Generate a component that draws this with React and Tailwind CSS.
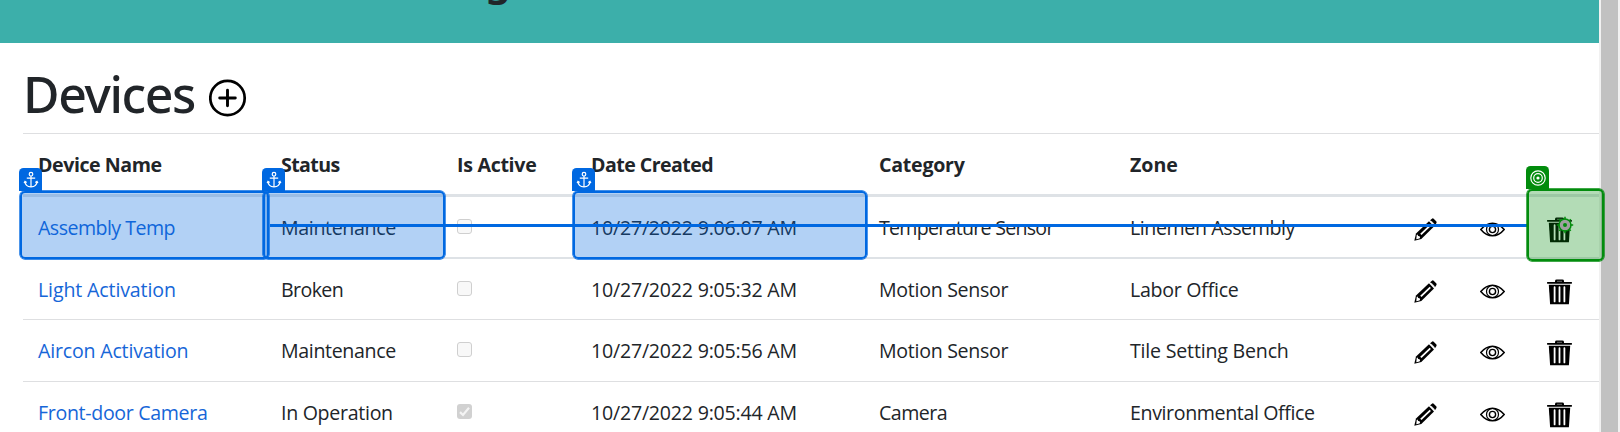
const columns = [
  { label: "Device Name", track: "tracking-[-0.45px]" },
  { label: "Status", track: "tracking-[-0.6px]" },
  { label: "Is Active", track: "tracking-[-0.3px]" },
  { label: "Date Created", track: "tracking-[-0.55px]" },
  { label: "Category", track: "tracking-[-0.25px]" },
  { label: "Zone", track: "tracking-[0px]" },
];

const devices = [
  {
    name: ["Assembly Temp", "tracking-[-0.54px]"],
    status: ["Maintenance", "tracking-[-0.36px]"],
    active: false,
    created: "10/27/2022 9:06:07 AM",
    category: ["Temperature Sensor", "tracking-[-0.73px]"],
    zone: ["Linemen Assembly", "tracking-[-0.4px]"],
    row: "h-[62px] border-b-2 border-[#dee2e6]",
  },
  {
    name: ["Light Activation", "tracking-[-0.14px]"],
    status: ["Broken", "tracking-[-0.6px]"],
    active: false,
    created: "10/27/2022 9:05:32 AM",
    category: ["Motion Sensor", "tracking-[-0.3px]"],
    zone: ["Labor Office", "tracking-[-0.27px]"],
    row: "h-[61px] border-b border-[#dedfe1]",
  },
  {
    name: ["Aircon Activation", "tracking-[-0.2px]"],
    status: ["Maintenance", "tracking-[-0.36px]"],
    active: false,
    created: "10/27/2022 9:05:56 AM",
    category: ["Motion Sensor", "tracking-[-0.3px]"],
    zone: ["Tile Setting Bench", "tracking-[-0.2px]"],
    row: "h-[62px] border-b border-[#dedfe1]",
  },
  {
    name: ["Front-door Camera", "tracking-[-0.33px]"],
    status: ["In Operation", "tracking-[-0.3px]"],
    active: true,
    created: "10/27/2022 9:05:44 AM",
    category: ["Camera", "tracking-[-0.55px]"],
    zone: ["Environmental Office", "tracking-[-0.38px]"],
    row: "h-[62px]",
  },
];

const grid =
  "grid grid-cols-[244px_176px_134px_288px_251px_276px_67px_67px_73px] items-start";

function Cell({ text, track, className = "pl-[14px]" }) {
  return (
    <div className={`pt-4 leading-[30px] whitespace-nowrap ${track} ${className}`}>
      {text}
    </div>
  );
}

function Checkbox({ checked }) {
  return (
    <div className="pt-[22px] pl-[14px]">
      {checked ? (
        <div className="flex size-[15px] items-center justify-center rounded-[3px] bg-[#d1d1d1]">
          <svg viewBox="0 0 15 15" className="size-[15px]" fill="none" stroke="#f4f4f4" strokeWidth="2.2">
            <path d="M3 8.1 6 11 12 3.8" />
          </svg>
        </div>
      ) : (
        <div className="size-[15px] rounded-[3px] border border-[#cfcfcf] bg-[#f8f8f8]" />
      )}
    </div>
  );
}

function Pencil() {
  return (
    <svg viewBox="0 0 24 24" className="mt-[21px] ml-[22px] size-6">
      <path d="M.3 22.8 2 15.6 15 3.2l5 5.2L7.3 20.9Z" fill="#000" />
      <path d="M16.1 2.2 18.3.4Q19 0 19.7.7L22.4 3.6Q23 4.4 22.3 5.2L21 7.2Z" fill="#000" />
      <path d="m17.1 2.9 3.7 3.8" stroke="#fff" strokeWidth=".8" />
      <path d="m6.2 15.8 9.5-9.1 1.2 1.3-9.4 9.1Z" fill="#fff" />
      <path d="m2.7 17 .9-.5.5 1.6 1.5.2.5 1.5-.7.6-3.1.9Z" fill="#fff" />
    </svg>
  );
}

function Eye() {
  return (
    <svg viewBox="0 0 25 15" className="mt-[25px] ml-[21px] h-[15px] w-[25px]" fill="none" stroke="#000">
      <path d="M.8 7.5Q6 1.2 12.5 1.2T24.2 7.5Q19 13.8 12.5 13.8T.8 7.5Z" strokeWidth="1.5" />
      <circle cx="12.5" cy="7.5" r="6" strokeWidth="1.2" />
      <circle cx="12.5" cy="7.5" r="3.1" strokeWidth="1.4" />
    </svg>
  );
}

function Trash() {
  return (
    <svg viewBox="0 0 25 26" className="mt-5 ml-[21px] h-[26px] w-[25px]">
      <path d="M8 3V1.8Q8.2.5 9.7.5h5.6Q16.8.5 17 1.8V3Z" fill="#000" />
      <path d="M10 2.3h5" stroke="#777" strokeWidth=".9" />
      <rect x="0" y="2.9" width="25" height="1.8" rx=".6" fill="#000" />
      <path d="M1.8 5.7h21.4l-1.3 19.6H3.1Z" fill="#000" />
      <path d="M7.6 8.2v14.2M12.5 8.2v14.2M17.4 8.2v14.2" stroke="#fff" strokeWidth="1.8" strokeLinecap="round" />
    </svg>
  );
}

function Anchor() {
  return (
    <svg viewBox="0 0 16 18" className="h-[18px] w-4" fill="none" stroke="#fff" strokeWidth="1.2">
      <circle cx="8" cy="3.2" r="1.8" />
      <path d="M8 5v11M3.8 7.2h8.4" />
      <path d="M1.9 10.2Q2.2 15.7 8 15.9 13.8 15.7 14.1 10.2M1.1 12.1l.9-1.8 1.7 1.2M14.9 12.1l-.9-1.8-1.7 1.2" />
    </svg>
  );
}

function AnchorBox({ place, width }) {
  return (
    <div className={`absolute top-[168px] ${place}`}>
      <div className="-ml-[0.6px] flex h-[23px] w-[22.5px] items-center justify-center rounded-t-[4.5px] bg-[#0068e1]">
        <Anchor />
      </div>
      <div
        className={`h-[68px] rounded-[5px] border-2 border-[#0068e1] bg-[#0068e1]/30 shadow-[0_0_0_0.7px_#0068e1] ${width}`}
      />
    </div>
  );
}

export default function App() {
  return (
    <div className="relative flex h-[432px] w-[1620px] overflow-hidden bg-white font-['Open_Sans','Noto_Sans',sans-serif] text-[19.6px] text-[#212529]">
      <main className="w-[1599px] shrink-0">
        <header className="h-[43px] overflow-hidden bg-[#3cafaa]">
          <div className="-mt-[42px] pl-[485px] font-['Noto_Sans',sans-serif] text-[42px] leading-[42px] font-semibold">g</div>
        </header>
        <div className="pl-[23px]">
          <div className="flex h-[91px] border-b border-[#dedfe1]">
            <h1 className="w-[186px] pt-[21px] font-['Noto_Sans',sans-serif] text-[50px] leading-[60px] font-medium tracking-[-1.4px]">
              Devices
            </h1>
            <svg viewBox="0 0 38 38" className="mt-9 size-[38px]" fill="none" stroke="#000">
              <circle cx="18.5" cy="19" r="17.2" strokeWidth="2.7" />
              <path d="M18.5 11.2v15.6M10.7 19h15.6" strokeWidth="2.9" strokeLinecap="round" />
            </svg>
          </div>
          <div className={`${grid} h-[63px] border-b-[3px] border-[#dee2e6] font-bold`}>
            {columns.map((c, i) => (
              <Cell key={c.label} text={c.label} track={c.track} className={i === 0 ? "pl-[15px]" : "pl-[14px]"} />
            ))}
          </div>
          {devices.map((d) => (
            <div key={d.created} className={`${grid} ${d.row}`}>
              <Cell text={d.name[0]} track={d.name[1]} className="pl-[15px] text-[#1666d8]" />
              <Cell text={d.status[0]} track={d.status[1]} />
              <Checkbox checked={d.active} />
              <Cell text={d.created} track="tracking-[-0.22px]" />
              <Cell text={d.category[0]} track={d.category[1]} />
              <Cell text={d.zone[0]} track={d.zone[1]} />
              <Pencil />
              <Eye />
              <Trash />
            </div>
          ))}
        </div>
      </main>
      <div className="flex w-[21px] shrink-0 bg-[#f1f1f1] pr-[2px] pl-[2px]">
        <div className="w-[17px] bg-[#c1c1c1]" />
      </div>

      <AnchorBox place="left-[20px]" width="w-[249px]" />
      <AnchorBox place="left-[263px]" width="w-[182px]" />
      <AnchorBox place="left-[573px]" width="w-[294px]" />
      <div className="absolute top-[224px] left-[270px] h-[2.67px] w-[1257px] bg-[#0068e1]" />
      <div className="absolute top-[166px] left-[1527px]">
        <div className="-ml-[0.6px] flex h-[23px] w-[22.5px] items-center justify-center rounded-t-[4.5px] bg-[#028c0d]">
          <svg viewBox="0 0 16 16" className="size-4" fill="none" stroke="#fff" strokeWidth="1.2">
            <circle cx="8" cy="8" r="7.2" />
            <circle cx="8" cy="8" r="4.3" />
            <circle cx="8" cy="8" r="1.6" fill="#fff" stroke="none" />
          </svg>
        </div>
        <div className="h-[72px] w-[77px] rounded-[5px] border-2 border-[#028c0d] bg-[#028c0d]/30 shadow-[0_0_0_0.7px_#028c0d]" />
      </div>
      <svg viewBox="0 0 18 18" className="absolute top-[216px] left-[1556px] size-[18px]">
        <circle cx="9" cy="9" r="6" fill="#a0a0a0" stroke="#028c0d" strokeWidth="1.5" />
        <path d="M9 .8v3M9 14.2v3M.8 9h3M14.2 9h3M3.2 3.2l1.5 1.5M14.8 3.2l-1.5 1.5M3.2 14.8l1.5-1.5M14.8 14.8l-1.5-1.5" stroke="#028c0d" strokeWidth="1.5" />
        <circle cx="9" cy="9" r="2" fill="#028c0d" />
      </svg>
    </div>
  );
}
